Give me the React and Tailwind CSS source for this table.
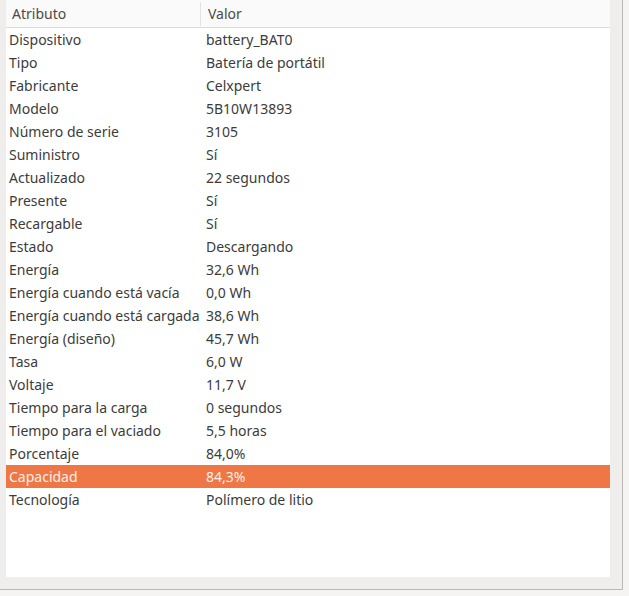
import React from "react";

const rows = [
  ["Dispositivo", "battery_BAT0"],
  ["Tipo", "Batería de portátil"],
  ["Fabricante", "Celxpert"],
  ["Modelo", "5B10W13893"],
  ["Número de serie", "3105"],
  ["Suministro", "Sí"],
  ["Actualizado", "22 segundos"],
  ["Presente", "Sí"],
  ["Recargable", "Sí"],
  ["Estado", "Descargando"],
  ["Energía", "32,6 Wh"],
  ["Energía cuando está vacía", "0,0 Wh"],
  ["Energía cuando está cargada", "38,6 Wh"],
  ["Energía (diseño)", "45,7 Wh"],
  ["Tasa", "6,0 W"],
  ["Voltaje", "11,7 V"],
  ["Tiempo para la carga", "0 segundos"],
  ["Tiempo para el vaciado", "5,5 horas"],
  ["Porcentaje", "84,0%"],
  ["Capacidad", "84,3%"],
  ["Tecnología", "Polímero de litio"],
];

export default function App() {
  return (
    <div
      className="w-[629px] h-[596px] bg-[#f5f4f3] overflow-hidden"
      style={{ fontFamily: '"Noto Sans", "DejaVu Sans", sans-serif' }}
    >
      <div className="w-[623px] h-[590px] bg-[#efeeed] border-r border-b border-[#b9b8b5] pl-[6px] pr-[12px] pb-[12px]">
        <div className="w-full h-full bg-white flex flex-col text-[14px] text-[#3c3c3c]">
          <div className="h-[28px] flex items-center bg-[#fafafa] border-b border-[#dcdcdc] text-[#4a4a4a]">
            <div className="w-[195px] h-[24px] flex items-center pl-[6px] border-r border-[#e2e2e2]">
              Atributo
            </div>
            <div className="pl-[7px]">Valor</div>
          </div>
          {rows.map(([k, v]) => {
            const sel = k === "Capacidad";
            return (
              <div
                key={k}
                className={
                  sel
                    ? "h-[23px] flex items-center bg-[#ef7745] text-[#fdf0ea]"
                    : "h-[23px] flex items-center"
                }
              >
                <div className="w-[200px] pl-[3px] whitespace-nowrap">{k}</div>
                <div className="whitespace-nowrap">{v}</div>
              </div>
            );
          })}
        </div>
      </div>
    </div>
  );
}
